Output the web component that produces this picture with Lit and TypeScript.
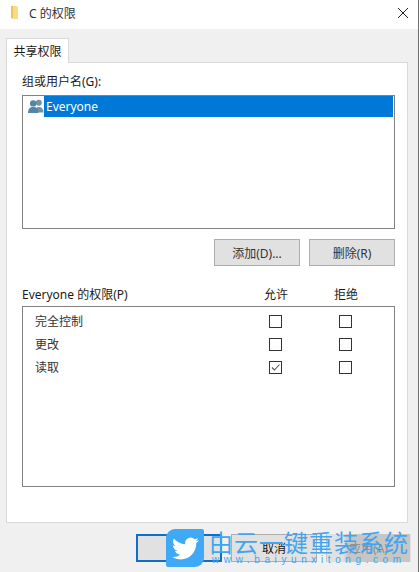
import { LitElement, html, css, svg } from "lit";
import { customElement } from "lit/decorators.js";

const perms = [
  { name: "完全控制", allow: false },
  { name: "更改", allow: false },
  { name: "读取", allow: true },
];

@customElement("app-root")
export class AppRoot extends LitElement {
  static styles = css`
    :host {
      display: block;
      width: 419px;
      height: 572px;
      overflow: hidden;
      position: relative;
      box-sizing: border-box;
      background: #f0f0f0;
      border-right: 1px solid #6f6f6f;
      font-family: "Noto Sans", "Noto Sans CJK SC", sans-serif;
      font-size: 12px;
      color: #1a1a1a;
    }
    .title {
      height: 29px;
      background: #fff;
      display: flex;
      align-items: center;
      padding: 0 10px 3px 10px;
      box-sizing: border-box;
    }
    .title .name { margin-left: 10px; font-size: 12px; color: #333; flex: 1; }
    .body { padding: 9px 10px 0 6px; }
    .tab {
      width: 63px;
      height: 25px;
      box-sizing: border-box;
      background: #fff;
      border: 1px solid #d9d9d9;
      border-bottom: none;
      display: flex;
      align-items: center;
      justify-content: center;
      padding-bottom: 1px;
      margin-bottom: -1px;
      position: relative;
      z-index: 1;
    }
    .panel {
      height: 461px;
      box-sizing: border-box;
      background: #fff;
      border: 1px solid #d9d9d9;
      padding: 8px 12px 0 15px;
    }
    .label {
      height: 24px;
      box-sizing: border-box;
      padding-bottom: 5px;
      display: flex;
      align-items: center;
    }
    .list {
      height: 134px;
      box-sizing: border-box;
      border: 1px solid #828282;
      padding: 0 1px 0 5px;
    }
    .entry { display: flex; align-items: flex-start; height: 22px; }
    .entry svg { margin-top: 3px; flex: none; }
    .sel {
      flex: 1;
      height: 21px;
      box-sizing: border-box;
      padding: 0 0 1px 2px;
      background: #0078d7;
      color: #fff;
      display: flex;
      align-items: center;
    }
    .btns { display: flex; justify-content: flex-end; gap: 9px; margin-top: 10px; }
    .btn {
      width: 86px;
      height: 27px;
      box-sizing: border-box;
      background: #e1e1e1;
      border: 1px solid #adadad;
      display: flex;
      align-items: center;
      justify-content: center;
      color: #333;
    }
    .cols {
      display: grid;
      grid-template-columns: 1fr 70px 70px 14px;
      margin-top: 17px;
      height: 23px;
      box-sizing: border-box;
      padding-bottom: 2px;
      align-items: center;
    }
    .cols .c { text-align: center; }
    .perms {
      height: 181px;
      box-sizing: border-box;
      border: 1px solid #828282;
      padding: 3px 0 0 12px;
    }
    .row {
      display: grid;
      grid-template-columns: 1fr 70px 70px 13.5px;
      height: 23px;
      align-items: center;
      color: #333;
    }
    .row .pname { padding-bottom: 2px; }
    .cb {
      width: 13px;
      height: 13px;
      box-sizing: border-box;
      border: 1px solid #333;
      background: #fff;
      justify-self: center;
      display: block;
    }
    .foot {
      display: flex;
      justify-content: flex-end;
      gap: 9px;
      padding-top: 11px;
      margin-right: -3px;
    }
    .fb {
      height: 28px;
      width: 86px;
      box-sizing: border-box;
      background: #e1e1e1;
      border: 1px solid #adadad;
      display: flex;
      align-items: center;
      justify-content: center;
      color: #111;
    }
    .ok { border: 2px solid #0f6fc6; }
    .apply {
      width: 85px;
      background: linear-gradient(to right, #e1e1e1 0, #e1e1e1 16px, #c6c6c6 21px);
      border-color: transparent;
      color: #8a8a8a;
    }
    .wm {
      position: absolute;
      left: 166px;
      top: 529px;
      display: flex;
      gap: 5px;
      pointer-events: none;
    }
    .badge {
      width: 38px;
      height: 38px;
      background: #3fa9f5;
      border-radius: 9px 2px 9px 2px;
      display: flex;
      align-items: center;
      justify-content: center;
    }
    .wm-text { display: flex; flex-direction: column; width: 200px; }
    .wm-cn {
      font-family: "Noto Sans CJK SC", sans-serif;
      font-size: 24px;
      line-height: 26px;
      height: 26px;
      letter-spacing: 1px;
      color: #42a5f0;
      white-space: nowrap;
    }
    .wm-en {
      font-family: "Liberation Sans", sans-serif;
      font-size: 10px;
      line-height: 10px;
      padding-left: 3px;
      letter-spacing: 4.6px;
      color: #42a5f0;
      white-space: nowrap;
    }
  `;

  private folder() {
    return svg`<svg width="9" height="14" viewBox="0 0 9 14"><path d="M1 0h6l1 1v12H3l-2-1z" fill="#f7dc85"/><path d="M1 0h2v12H1z" fill="#ecc45a"/></svg>`;
  }
  private close() {
    return svg`<svg width="10" height="10" viewBox="0 0 10 10"><path d="M0 0l10 10M10 0L0 10" stroke="#222" fill="none"/></svg>`;
  }
  private users() {
    return svg`<svg width="16" height="15" viewBox="0 0 17 15"><circle cx="11.5" cy="3.6" r="3.2" fill="#6d93ad"/><path d="M7 14c0-4 1.500-6 4.500-6s5 2 5 6z" fill="#6d93ad"/><circle cx="5.500" cy="4.200" r="3.400" fill="#4f86aa"/><path d="M0 14.500c0-4.500 2-6.500 5.500-6.500s5.500 2 5.500 6.500z" fill="#4f86aa"/></svg>`;
  }
  private check() {
    return svg`<svg width="11" height="11" viewBox="0 0 11 11" style="display:block"><path d="M2 5.500l2.500 2.500 5-5.500" stroke="#555" stroke-width="1.100" fill="none"/></svg>`;
  }
  private bird() {
    return svg`<svg width="27" height="27" viewBox="0 0 24 24"><path fill="#fff" d="M23.953 4.57a10 10 0 01-2.825.775 4.958 4.958 0 002.163-2.723c-.951.555-2.005.959-3.127 1.184a4.92 4.92 0 00-8.384 4.482C7.69 8.095 4.067 6.13 1.64 3.162a4.822 4.822 0 00-.666 2.475c0 1.71.87 3.213 2.188 4.096a4.904 4.904 0 01-2.228-.616v.06a4.923 4.923 0 003.946 4.827 4.996 4.996 0 01-2.212.085 4.936 4.936 0 004.604 3.417 9.867 9.867 0 01-6.102 2.105c-.39 0-.779-.023-1.17-.067a13.995 13.995 0 007.557 2.209c9.053 0 13.998-7.496 13.998-13.985 0-.21 0-.42-.015-.63A9.935 9.935 0 0024 4.59z"/></svg>`;
  }

  render() {
    return html`
      <div class="title">
        ${this.folder()}<span class="name">C 的权限</span>${this.close()}
      </div>
      <div class="body">
        <div class="tab">共享权限</div>
        <div class="panel">
          <div class="label">组或用户名(G):</div>
          <div class="list">
            <div class="entry">${this.users()}<span class="sel">Everyone</span></div>
          </div>
          <div class="btns">
            <div class="btn">添加(D)...</div>
            <div class="btn">删除(R)</div>
          </div>
          <div class="cols">
            <span>Everyone 的权限(P)</span>
            <span class="c">允许</span>
            <span class="c">拒绝</span>
          </div>
          <div class="perms">
            ${perms.map(
              (p) => html`<div class="row">
                <span class="pname">${p.name}</span>
                <span class="cb">${p.allow ? this.check() : ""}</span>
                <span class="cb"></span>
              </div>`
            )}
          </div>
        </div>
        <div class="foot">
          <div class="fb ok"></div>
          <div class="fb">取消</div>
          <div class="fb apply">应用(A)</div>
        </div>
      </div>
      <div class="wm">
        <div class="badge">${this.bird()}</div>
        <div class="wm-text">
          <div class="wm-cn">由云一键重装系统</div>
          <div class="wm-en">www.baiyunxitong.com</div>
        </div>
      </div>
    `;
  }
}
